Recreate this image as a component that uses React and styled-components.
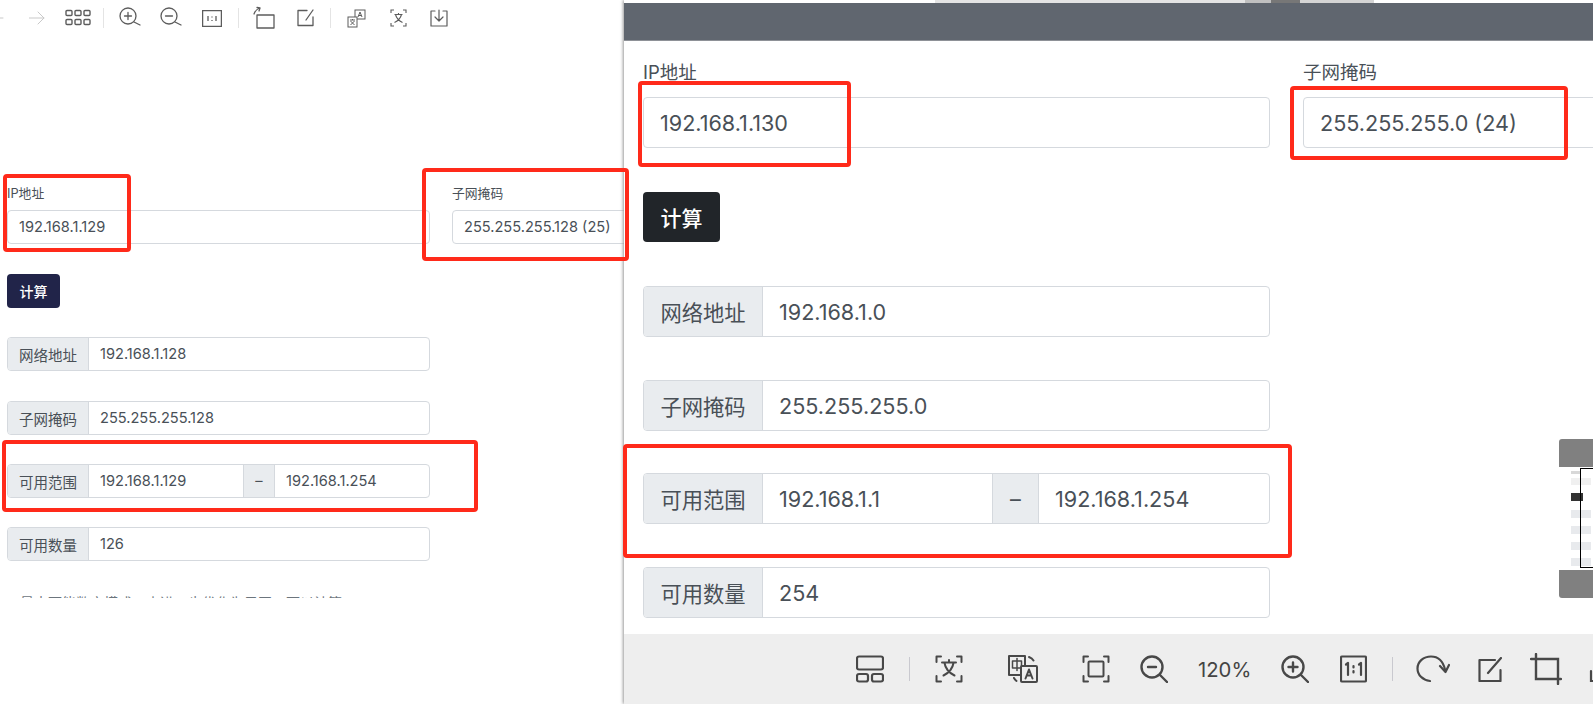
import React from 'react';
import styled, { createGlobalStyle } from 'styled-components';

const Global = createGlobalStyle`
  html, body { margin: 0; padding: 0; height: 100%; overflow: hidden; background: #fff; }
  #root { height: 704px; }
  * { box-sizing: border-box; }
`;
const Page = styled.div`
  position: relative; display: flex; width: 1593px; height: 704px; overflow: hidden;
  font-family: Inter, "Noto Sans CJK SC", sans-serif; color: #495057; background: #fff;
`;
const LeftPanel = styled.section`
  width: 624px; flex: none; height: 704px; padding-left: 7px; overflow: hidden;
`;
const LeftBar = styled.div`
  display: flex; align-items: center; height: 36px; margin-left: -7px;
`;
const Slot = styled.span`
  display: flex; flex: none; margin-left: ${p => p.$ml || 0}px;
`;
const Sep = styled.span`
  flex: none; width: 1px; height: ${p => p.$h || 20}px; background: ${p => p.$c || '#e4e4e4'};
  margin-left: ${p => p.$ml || 0}px;
`;
const FieldGrid = styled.div`
  display: grid; grid-template-columns: ${p => p.$cols};
  column-gap: ${p => p.$gap}px; margin-top: ${p => p.$top}px;
`;
const Label = styled.label`
  display: block; font-size: ${p => p.$fs}px; line-height: ${p => p.$lh}px;
  margin-bottom: ${p => p.$mb}px; color: #495057; white-space: nowrap;
`;
const TextBox = styled.div`
  display: flex; align-items: center; height: ${p => p.$h}px; padding-left: ${p => p.$pl}px;
  font-size: ${p => p.$fs}px; border: 1px solid #d5d9de; border-radius: 4px; background: #fff;
  white-space: nowrap; color: #495057;
`;
const Btn = styled.button`
  display: block; padding: 0; border: 0; border-radius: 4px; color: #fff;
  width: ${p => p.$w}px; height: ${p => p.$h}px; background: ${p => p.$bg};
  font: 500 ${p => p.$fs}px "Noto Sans CJK SC", sans-serif; margin-top: ${p => p.$top}px;
`;
const Group = styled.div`
  display: flex; width: ${p => p.$w}px; height: ${p => p.$h}px; margin-top: ${p => p.$top}px;
  border: 1px solid #d5d9de; border-radius: 4px; overflow: hidden; background: #fff;
`;
const Addon = styled.span`
  display: flex; align-items: center; justify-content: center; flex: none; width: ${p => p.$w}px;
  background: #e9ecef; color: #495057; font-size: ${p => p.$fs}px;
  border-left: ${p => p.$mid ? '1px solid #d5d9de' : '0'}; border-right: 1px solid #d5d9de;
`;
const Value = styled.span`
  display: flex; align-items: center; min-width: 0; flex: ${p => p.$tail ? `0 0 ${p.$tail}px` : '1 1 0'};
  padding-left: ${p => p.$pl}px; font-size: ${p => p.$fs}px; color: #495057;
`;
const Cut = styled.div`
  height: 5px; overflow: hidden; margin-top: 32px; padding-left: 13px;
  font-size: 14px; line-height: 20px; color: #6c757d; white-space: nowrap;
`;
const RightPanel = styled.section`
  display: flex; flex-direction: column; flex: 1; height: 704px; min-width: 0;
  box-shadow: -1px 0 3px #999; z-index: 1; background: #fff;
`;
const Chrome = styled.div`
  display: flex; flex: none; height: 3px; background: #fff;
`;
const ChromePiece = styled.span`
  flex: none; margin-left: ${p => p.$ml}px; width: ${p => p.$w}px; background: ${p => p.$c};
`;
const Header = styled.div`
  flex: none; height: 38px; background: #60666f; border-bottom: 1px solid #8e9197;
`;
const Body = styled.div`
  flex: 1; min-height: 0; padding-left: 19px; overflow: hidden;
`;
const BottomBar = styled.div`
  display: flex; align-items: center; flex: none; height: 70px; background: #eeeeee; overflow: hidden;
  padding-left: 232px;
`;
const Zoom = styled.span`
  flex: none; margin-left: ${p => p.$ml}px; font-size: 20.300px; color: #444;
`;
const RedBox = styled.div`
  position: absolute; z-index: 3; left: ${p => p.$x}px; top: ${p => p.$y}px;
  width: ${p => p.$w}px; height: ${p => p.$h}px; border: 4px solid #ff2a1a; border-radius: 4px;
`;
const Thumb = styled.aside`
  position: absolute; z-index: 2; left: 1559px; top: 439px; width: 34px; height: 159px;
  display: flex; flex-direction: column;
`;
const ThumbCap = styled.div`
  flex: none; height: 28px; background: #808080; border-radius: ${p => p.$r};
`;
const ThumbBody = styled.div`
  flex: 1; background: #fff; padding: 4px 0 0 12px; display: flex; flex-direction: column;
  align-items: flex-start;
`;
const ThumbBlock = styled.span`
  display: block; flex: none; width: ${p => p.$w}px; height: ${p => p.$h}px; background: ${p => p.$c};
  margin-bottom: ${p => p.$mb}px;
`;
const ThumbFrame = styled.div`
  position: absolute; left: 21px; top: 29px; width: 14px; height: 100px;
  border: 1.5px solid #000; border-right: 0;
`;

const S = ({ size = 28, vb = 28, c = '#555', w = 2, children }) => (
  <svg width={size} height={size} viewBox={`0 0 ${vb} ${vb}`} fill="none" stroke={c} strokeWidth={w} strokeLinecap="round" strokeLinejoin="round">{children}</svg>
);

/* Top-left toolbar icons */
const LIcons = {
  back: () => <S size={16} vb={16} c="#c9c9c9" w={1}><path d="M-12 8H3" /></S>,
  forward: () => <S size={16} vb={16} c="#c9c9c9" w={1}><path d="M0 8h15M9 2l6 6-6 6" /></S>,
  grid: () => <svg width="26" height="18" viewBox="0 0 26 18" fill="none" stroke="#5c5c5c" strokeWidth="1.4"><rect x="1" y="1.500" width="6" height="5" rx="1"/><rect x="10" y="1.500" width="6" height="5" rx="1"/><rect x="19" y="1.500" width="6" height="5" rx="1"/><rect x="1" y="10.500" width="6" height="5" rx="1"/><rect x="10" y="10.500" width="6" height="5" rx="1"/><rect x="19" y="10.500" width="6" height="5" rx="1"/></svg>,
  zin: () => <S size={22} vb={22} c="#5c5c5c" w={1.3}><circle cx="9" cy="9" r="8"/><path d="M15 15l6 3M5.500 9h7M9 5.500v7"/></S>,
  zout: () => <S size={22} vb={22} c="#5c5c5c" w={1.3}><circle cx="9" cy="9" r="8"/><path d="M15 15l6 3M5.500 9h7"/></S>,
  one: () => <svg width="20" height="17" viewBox="0 0 20 17" fill="none" stroke="#5c5c5c" strokeWidth="1.3"><rect x=".6" y=".6" width="18.8" height="15.8"/><path d="M6 6v5M10 6.500v1M10 10v1M14 6v5"/></svg>,
  rot: () => <S size={24} vb={24} c="#5c5c5c" w={1.3}><rect x="5" y="9" width="17" height="13"/><path d="M2 8c1-3 3-5 6-6M8 2l-3-.5M8 2l-1 3"/></S>,
  edit: () => <S size={18} vb={18} c="#5c5c5c" w={1.3}><path d="M10 1.500H1v15h15V8M16 1l-7 10"/></S>,
  tr: () => <svg width="19" height="19" viewBox="0 0 19 19" fill="none" stroke="#5c5c5c" strokeWidth="1"><rect x="8" y="1" width="10" height="9"/><rect x="1" y="8" width="9" height="10" fill="#fff"/><path d="M11 8l2-5 2 5M11.800 6.500h2.400M3 11h5M5.500 10v1M3.500 16l4-4M7.500 16l-4-4"/></svg>,
  scan: () => <svg width="17" height="18" viewBox="0 0 17 18" fill="none" stroke="#5c5c5c" strokeWidth="1.1"><path d="M1 4V1h3M13 1h3v3M1 14v3h3M13 17h3v-3M4.500 5.500h8M8.500 4v1.500M5.500 5.500c1 4 4 6.500 7 8M11.500 5.500c-1 4-4 6.500-7 8"/></svg>,
  save: () => <S size={18} vb={18} c="#5c5c5c" w={1.2}><path d="M5 2H1v15h16V2h-4M9 1v11M5 8l4 4 4-4"/></S>,
};

/* Bottom toolbar icons */
const BIcons = {
  layout: () => <S w={2.2} c="#484848"><rect x="1" y="1.500" width="26" height="13" rx="2"/><rect x="1" y="19" width="11" height="7.500" rx="2"/><rect x="16" y="19" width="11" height="7.500" rx="2"/></S>,
  scan: () => <S w={2} c="#484848"><path d="M1.500 7V1.500H6M22 1.500h4.500V7M1.500 21v5.500H6M22 26.500h4.500V21M7 7.500h14M14 5v2.500M9.500 8c1 6 5 10 10 12.500M18.500 8c-1 6-5 10-10 12.500"/></S>,
  tr: () => (
    <svg width="30" height="28" viewBox="0 0 30 28" fill="none" stroke="#484848" strokeWidth="2" strokeLinecap="round" strokeLinejoin="round">
      <rect x="1" y="1" width="16" height="19" fill="#eee" />
      <rect x="4.500" y="6" width="9" height="7" strokeWidth="1.500" />
      <path d="M9 3.500v12" strokeWidth="1.500" />
      <path d="M21 2c2 .8 3.500 1.800 4.500 3.500M6 23c.5 1 1.200 2 2.500 3" />
      <rect x="13" y="11" width="16" height="16" rx="1" fill="#eee" />
      <path d="M17.500 23.500l3.500-9 3.500 9M18.800 20.500h4.400" />
    </svg>
  ),
  fit: () => <S w={2} c="#484848"><path d="M1.500 7V1.500H6M22 1.500h4.500V7M1.500 21v5.500H6M22 26.500h4.500V21"/><rect x="6.500" y="6.500" width="15" height="15" rx="1"/></S>,
  zout: () => <S w={2.400} c="#484848"><circle cx="12" cy="12" r="10.500"/><path d="M20 20l7 7M8 12h8"/></S>,
  zin: () => <S w={2.400} c="#484848"><circle cx="12" cy="12" r="10.500"/><path d="M20 20l7 7M7.500 12h9M12 7.500v9"/></S>,
  one: () => (
    <svg width="27" height="28" viewBox="0 0 27 28" fill="none" stroke="#484848" strokeWidth="2.200" strokeLinecap="round" strokeLinejoin="round">
      <rect x="1" y="1.500" width="25" height="25" rx="1"/>
      <path d="M6 9.500l2-1.500v12M13.500 11v1.500M13.500 16v1.500M19 9.500l2-1.500v12" />
    </svg>
  ),
  rot: () => <svg width="34" height="28" viewBox="0 0 34 28" fill="none" stroke="#484848" strokeWidth="2.200" strokeLinecap="round" strokeLinejoin="round"><path d="M14 26C6.500 25 1.500 20 1.500 13.500 1.500 6.500 7.500 1.500 15 1.500c7 0 12 4.500 14 13"/><path d="M24 11l5.500 6 3.500-7"/></svg>,
  edit: () => <svg width="24" height="25" viewBox="0 0 24 25" fill="none" stroke="#484848" strokeWidth="2.200" strokeLinecap="round" strokeLinejoin="round"><path d="M17 3H1.500v21h21V13M23 1L10 16"/></svg>,
  crop: () => <svg width="32" height="32" viewBox="0 0 32 32" fill="none" stroke="#484848" strokeWidth="2.400" strokeLinecap="round"><path d="M1 6h27v25M6 1v25h25"/></svg>,
  save: () => <svg width="20" height="28" viewBox="0 0 20 28" fill="none" stroke="#484848" strokeWidth="2.200" strokeLinecap="round"><path d="M2 16v10h16"/></svg>,
};

const Row = ({ label, value, to, t, top }) => (
  <Group $w={t.w} $h={t.h} $top={top ?? t.gap}>
    <Addon $w={t.addon} $fs={t.labelFs}>{label}</Addon>
    <Value $pl={t.pl} $fs={t.fs}>{value}</Value>
    {to && <Addon $mid $w={t.dash} $fs={t.fs}>–</Addon>}
    {to && <Value $pl={t.pl} $fs={t.fs} $tail={t.tail}>{to}</Value>}
  </Group>
);

const leftT = { w: 423, h: 34, addon: 81, labelFs: 14.5, fs: 14.6, pl: 11, dash: 32, tail: 154, gap: 29 };
const rightT = { w: 627, h: 51, addon: 119, labelFs: 21.3, fs: 21.6, pl: 16, dash: 47, tail: 230, gap: 43 };

export default function App() {
  return (
    <Page>
      <Global />
      <LeftPanel>
        <LeftBar>
          <Slot $ml={0}><LIcons.back /></Slot>
          <Slot $ml={13}><LIcons.forward /></Slot>
          <Slot $ml={20}><LIcons.grid /></Slot>
          <Sep $ml={12} />
          <Slot $ml={15}><LIcons.zin /></Slot>
          <Slot $ml={19}><LIcons.zout /></Slot>
          <Slot $ml={20}><LIcons.one /></Slot>
          <Sep $ml={16} />
          <Slot $ml={13}><LIcons.rot /></Slot>
          <Slot $ml={21}><LIcons.edit /></Slot>
          <Sep $ml={15} />
          <Slot $ml={16}><LIcons.tr /></Slot>
          <Slot $ml={24}><LIcons.scan /></Slot>
          <Slot $ml={23}><LIcons.save /></Slot>
        </LeftBar>
        <FieldGrid $cols="423px 320px" $gap={22} $top={149}>
          <div>
            <Label $fs={12.8} $lh={18} $mb={7}>IP地址</Label>
            <TextBox $h={34} $pl={11} $fs={14.6}>192.168.1.129</TextBox>
          </div>
          <div>
            <Label $fs={12.8} $lh={18} $mb={7}>子网掩码</Label>
            <TextBox $h={34} $pl={11} $fs={14.6}>255.255.255.128 (25)</TextBox>
          </div>
        </FieldGrid>
        <Btn $w={53} $h={34} $bg="#212449" $fs={14} $top={30}>计算</Btn>
        <Row t={leftT} label="网络地址" value="192.168.1.128" />
        <Row t={leftT} top={30} label="子网掩码" value="255.255.255.128" />
        <Row t={leftT} label="可用范围" value="192.168.1.129" to="192.168.1.254" />
        <Row t={leftT} label="可用数量" value="126" />
        <Cut>最大可能数字模式，未进一步优化为子网，可以计算</Cut>
      </LeftPanel>
      <RightPanel>
        <Chrome>
          <ChromePiece $ml={311} $w={310} $c="#e4e4e4" />
          <ChromePiece $ml={0} $w={26} $c="#c0c0c0" />
          <ChromePiece $ml={0} $w={29} $c="#777" />
          <ChromePiece $ml={0} $w={74} $c="#d4d4d4" />
        </Chrome>
        <Header />
        <Body>
          <FieldGrid $cols="627px 320px" $gap={33} $top={19}>
            <div>
              <Label $fs={18.5} $lh={24} $mb={13}>IP地址</Label>
              <TextBox $h={51} $pl={16} $fs={21.6}>192.168.1.130</TextBox>
            </div>
            <div>
              <Label $fs={18.5} $lh={24} $mb={13}>子网掩码</Label>
              <TextBox $h={51} $pl={16} $fs={21.6}>255.255.255.0 (24)</TextBox>
            </div>
          </FieldGrid>
          <Btn $w={77} $h={50} $bg="#212529" $fs={21} $top={44}>计算</Btn>
          <Row t={rightT} top={44} label="网络地址" value="192.168.1.0" />
          <Row t={rightT} label="子网掩码" value="255.255.255.0" />
          <Row t={rightT} top={42} label="可用范围" value="192.168.1.1" to="192.168.1.254" />
          <Row t={rightT} label="可用数量" value="254" />
        </Body>
        <BottomBar>
          <Slot><BIcons.layout /></Slot>
          <Sep $ml={25} $h={24} $c="#c9c9cf" />
          <Slot $ml={25}><BIcons.scan /></Slot>
          <Slot $ml={45}><BIcons.tr /></Slot>
          <Slot $ml={44}><BIcons.fit /></Slot>
          <Slot $ml={30}><BIcons.zout /></Slot>
          <Zoom $ml={30}>120%</Zoom>
          <Slot $ml={30}><BIcons.zin /></Slot>
          <Slot $ml={31}><BIcons.one /></Slot>
          <Sep $ml={25} $h={24} $c="#c9c9cf" />
          <Slot $ml={23}><BIcons.rot /></Slot>
          <Slot $ml={28}><BIcons.edit /></Slot>
          <Slot $ml={28}><BIcons.crop /></Slot>
          <Slot $ml={27}><BIcons.save /></Slot>
        </BottomBar>
      </RightPanel>
      <Thumb>
        <ThumbCap $r="3px 0 0 0" />
        <ThumbBody>
          <ThumbBlock $w={9} $h={3} $c="#d8d8d8" $mb={4} />
          <ThumbBlock $w={20} $h={7} $c="#f0f0f0" $mb={8} />
          <ThumbBlock $w={12} $h={8} $c="#333" $mb={9} />
          <ThumbBlock $w={20} $h={8} $c="#e8eaed" $mb={8} />
          <ThumbBlock $w={20} $h={8} $c="#e8eaed" $mb={8} />
          <ThumbBlock $w={20} $h={8} $c="#e8eaed" $mb={8} />
          <ThumbBlock $w={20} $h={8} $c="#e8eaed" $mb={0} />
        </ThumbBody>
        <ThumbCap $r="0 0 0 3px" />
        <ThumbFrame />
      </Thumb>
      <RedBox $x={3} $y={174} $w={128} $h={78} />
      <RedBox $x={422} $y={168} $w={207} $h={93} />
      <RedBox $x={2} $y={440} $w={476} $h={72} />
      <RedBox $x={638} $y={81} $w={213} $h={86} />
      <RedBox $x={1290} $y={86} $w={278} $h={74} />
      <RedBox $x={623} $y={444} $w={669} $h={114} />
    </Page>
  );
}
